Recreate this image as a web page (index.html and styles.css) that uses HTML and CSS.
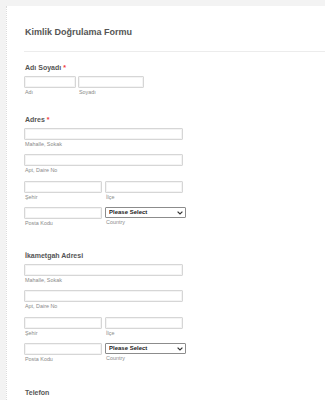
FILE: index.html
```html
<!DOCTYPE html>
<html lang="tr">
<head>
    <meta charset="UTF-8">
    <meta name="viewport" content="width=device-width, initial-scale=1.0">
    <title>Kimlik Doğrulama Formu</title>
    <link rel="stylesheet" href="styles.css">
</head>
<body>
    <div class="form-card">
        <div class="form-header">
            <h1 class="form-title">Kimlik Doğrulama Formu</h1>
        </div>

        <div class="form-line line-name">
            <label class="form-label">Adı Soyadı <span class="req">*</span></label>
            <div class="field-row">
                <div class="field">
                    <input type="text" class="input input-first">
                    <span class="sublabel">Adı</span>
                </div>
                <div class="field">
                    <input type="text" class="input input-last">
                    <span class="sublabel">Soyadı</span>
                </div>
            </div>
        </div>

        <div class="form-line line-address">
            <label class="form-label">Adres <span class="req">*</span></label>
            <div class="address">
                <div class="field">
                    <input type="text" class="input input-full">
                    <span class="sublabel">Mahalle, Sokak</span>
                </div>
                <div class="field">
                    <input type="text" class="input input-full">
                    <span class="sublabel">Apt, Daire No</span>
                </div>
                <div class="field-row split">
                    <div class="field">
                        <input type="text" class="input input-half">
                        <span class="sublabel">Şehir</span>
                    </div>
                    <div class="field">
                        <input type="text" class="input input-half">
                        <span class="sublabel">İlçe</span>
                    </div>
                </div>
                <div class="field-row split">
                    <div class="field">
                        <input type="text" class="input input-half">
                        <span class="sublabel">Posta Kodu</span>
                    </div>
                    <div class="field">
                        <div class="select-wrap">
                            <select class="select">
                                <option>Please Select</option>
                            </select>
                            <svg class="chevron" width="6" height="4" viewBox="0 0 6 4"><path d="M0.6 0.6 L3 3 L5.4 0.6" fill="none" stroke="#333" stroke-width="1.2"/></svg>
                        </div>
                        <span class="sublabel">Country</span>
                    </div>
                </div>
            </div>
        </div>

        <div class="form-line line-address">
            <label class="form-label">İkametgah Adresi</label>
            <div class="address">
                <div class="field">
                    <input type="text" class="input input-full">
                    <span class="sublabel">Mahalle, Sokak</span>
                </div>
                <div class="field">
                    <input type="text" class="input input-full">
                    <span class="sublabel">Apt, Daire No</span>
                </div>
                <div class="field-row split">
                    <div class="field">
                        <input type="text" class="input input-half">
                        <span class="sublabel">Şehir</span>
                    </div>
                    <div class="field">
                        <input type="text" class="input input-half">
                        <span class="sublabel">İlçe</span>
                    </div>
                </div>
                <div class="field-row split">
                    <div class="field">
                        <input type="text" class="input input-half">
                        <span class="sublabel">Posta Kodu</span>
                    </div>
                    <div class="field">
                        <div class="select-wrap">
                            <select class="select">
                                <option>Please Select</option>
                            </select>
                            <svg class="chevron" width="6" height="4" viewBox="0 0 6 4"><path d="M0.6 0.6 L3 3 L5.4 0.6" fill="none" stroke="#333" stroke-width="1.2"/></svg>
                        </div>
                        <span class="sublabel">Country</span>
                    </div>
                </div>
            </div>
        </div>

        <div class="form-line line-phone">
            <label class="form-label">Telefon</label>
        </div>
    </div>
</body>
</html>
```

FILE: styles.css
```css
body {
    font-family: 'Liberation Sans', Arial, sans-serif;
    background: #f3f3f3;
    margin: 0;
    padding: 6px 0 0 6px;
    height: 400px;
    box-sizing: border-box;
    overflow: hidden;
}
.form-card {
    background: white;
    border-left: 1px dotted #dcdcdc;
    padding: 19px 0 0 17px;
    height: 394px;
    box-sizing: border-box;
    overflow: hidden;
}
.form-header {
    border-bottom: 1px solid #ececec;
    padding-bottom: 12px;
}
.form-title {
    font-size: 9px;
    line-height: 14px;
    font-weight: 700;
    color: #555;
    margin: 0 0 0 1px;
}
.form-line {
    display: flex;
    flex-direction: column;
}
.line-name {
    margin-top: 11px;
}
.line-address {
    margin-top: 19px;
}
.line-address + .line-address {
    margin-top: 24px;
}
.line-phone {
    margin-top: 25px;
}
.form-label {
    font-size: 7px;
    line-height: 10px;
    font-weight: 700;
    color: #555;
    margin: 0 0 3px 1px;
}
.req {
    color: #f23a3c;
}
.field-row {
    display: flex;
    gap: 2px;
}
.field-row.split {
    gap: 3px;
}
.address {
    display: flex;
    flex-direction: column;
    gap: 6.33px;
}
.field {
    display: flex;
    flex-direction: column;
}
.input {
    display: block;
    box-sizing: border-box;
    height: 12px;
    margin: 0;
    padding: 0;
    border: 1px solid #d6d6d6;
    border-radius: 1px;
    background: white;
    box-shadow: inset 0 0 0 1px #f4f4f4;
}
.input-first {
    width: 52px;
}
.input-last {
    width: 66px;
}
.input-full {
    width: 159px;
}
.input-half {
    width: 78px;
}
.sublabel {
    font-size: 5.4px;
    line-height: 8px;
    color: #8a8a8a;
    margin-left: 1px;
}
.select-wrap {
    position: relative;
    width: 81px;
    height: 11px;
}
.select {
    display: block;
    appearance: none;
    -webkit-appearance: none;
    box-sizing: border-box;
    width: 81px;
    height: 11px;
    margin: 0;
    padding: 0 0 0 3px;
    border: 1px solid #8c8c8c;
    border-radius: 1px;
    background: white;
    font-family: 'Liberation Sans', Arial, sans-serif;
    font-size: 6px;
    font-weight: 700;
    color: #222;
    line-height: 9px;
}
.chevron {
    position: absolute;
    right: 3px;
    top: 4px;
}
```
